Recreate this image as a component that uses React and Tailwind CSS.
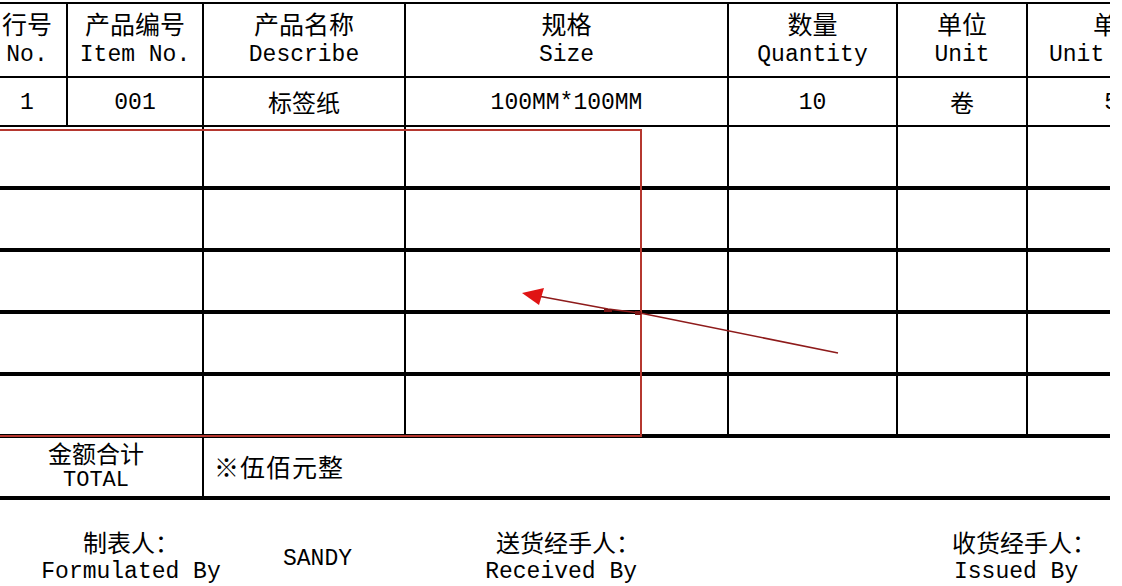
import React from 'react';

const ZH = "font-['Noto_Sans_CJK_SC',sans-serif]";
const EN = "font-['Liberation_Mono','DejaVu_Sans_Mono',monospace]";

const cols = [
  { w: 'w-[68px] pr-[12px]', zh: '行号', en: 'No.', val: '1' },
  { w: 'w-[136px]', zh: '产品编号', en: 'Item No.', val: '001' },
  { w: 'w-[202px]', zh: '产品名称', en: 'Describe', val: '标签纸', valZh: true },
  { w: 'w-[323px]', zh: '规格', en: 'Size', val: '100MM*100MM' },
  { w: 'w-[169px]', zh: '数量', en: 'Quantity', val: '10' },
  { w: 'w-[130px]', zh: '单位', en: 'Unit', val: '卷', valZh: true },
  { w: 'w-[182px]', zh: '单价', en: 'Unit Price', val: '50' },
];

const emptyCols = ['w-[204px]', 'w-[202px]', 'w-[323px]', 'w-[169px]', 'w-[130px]', 'w-[182px]'];

const EmptyRow = ({ h }) => (
  <div className={`flex border-b-4 border-black ${h}`}>
    {emptyCols.map((w, i) => (
      <div key={i} className={`${w} shrink-0 border-r-2 border-black`} />
    ))}
  </div>
);

export default function App() {
  return (
    <div className="relative w-[1122px] h-[586px] bg-white text-black overflow-hidden">
      {/* Table */}
      <div className="w-[1110px] overflow-hidden mt-[2px]">
        <div className="w-[1210px] border-t-2 border-black">
          {/* Header */}
          <div className="flex h-[74px] border-b-2 border-black">
            {cols.map((c, i) => (
              <div key={i} className={`${c.w} shrink-0 border-r-2 border-black flex flex-col items-center justify-center`}>
                <span className={`${ZH} text-[25px] leading-[27px] whitespace-nowrap`}>{c.zh}</span>
                <span className={`${EN} text-[23px] leading-[29px] pt-[4px] whitespace-nowrap`}>{c.en}</span>
              </div>
            ))}
          </div>

          {/* Item row */}
          <div className="flex h-[49px] border-b-2 border-black">
            {cols.map((c, i) => (
              <div key={i} className={`${c.w} shrink-0 border-r-2 border-black flex items-center justify-center`}>
                <span className={c.valZh ? `${ZH} text-[24px]` : `${EN} text-[23px] pt-[4px]`}>{c.val}</span>
              </div>
            ))}
          </div>

          {/* Empty rows */}
          <EmptyRow h="h-[63px]" />
          <EmptyRow h="h-[62px]" />
          <EmptyRow h="h-[62px]" />
          <EmptyRow h="h-[62px]" />
          <EmptyRow h="h-[62px]" />

          {/* Total */}
          <div className="flex h-[62px] border-b-4 border-black">
            <div className="w-[204px] shrink-0 border-r-2 border-black flex flex-col items-center justify-center pr-[10px]">
              <span className={`${ZH} text-[24px] leading-[28px]`}>金额合计</span>
              <span className={`${EN} text-[22px] leading-[28px]`}>TOTAL</span>
            </div>
            <div className="flex items-center pl-[10px]">
              <span className={`${ZH} text-[25px] tracking-[1px]`}>※伍佰元整</span>
            </div>
          </div>
        </div>
      </div>

      {/* Signatures */}
      <div className="flex items-center pt-[28px]">
        <div className="w-[262px] flex flex-col items-center">
          <span className={`${ZH} text-[24px] leading-[27px]`}>制表人：</span>
          <span className={`${EN} text-[23px] leading-[27px] pt-[4px] whitespace-nowrap`}>Formulated By</span>
        </div>
        <div className={`w-[111px] pl-[21px] pt-[4px] ${EN} text-[23px]`}>SANDY</div>
        <div className="w-[267px] flex flex-col items-end">
          <span className={`${ZH} text-[24px] leading-[27px]`}>送货经手人：</span>
          <span className={`${EN} text-[23px] leading-[27px] pt-[4px] whitespace-nowrap pr-[3px]`}>Received By</span>
        </div>
        <div className="ml-[312px] flex flex-col items-start">
          <span className={`${ZH} text-[24px] leading-[27px]`}>收货经手人：</span>
          <span className={`${EN} text-[23px] leading-[27px] pt-[4px] whitespace-nowrap pl-[2px]`}>Issued By</span>
        </div>
      </div>

      {/* Red selection box */}
      <div className="absolute left-[-2px] top-[129px] w-[644px] h-[308px] border-2 border-[#b5372f] pointer-events-none" />

      {/* Arrow annotation */}
      <svg className="absolute left-0 top-0 pointer-events-none" width="1122" height="586" viewBox="0 0 1122 586">
        <polyline points="538,296 608,309 640,313 838,353" fill="none" stroke="#8e1b1b" strokeWidth="1.6" />
        <polygon points="522,293 544,288 539,305" fill="#e01414" />
        <rect x="604" y="309" width="8" height="3" fill="#7a1515" />
        <rect x="635" y="311" width="6" height="4" fill="#7a1515" />
      </svg>
    </div>
  );
}
